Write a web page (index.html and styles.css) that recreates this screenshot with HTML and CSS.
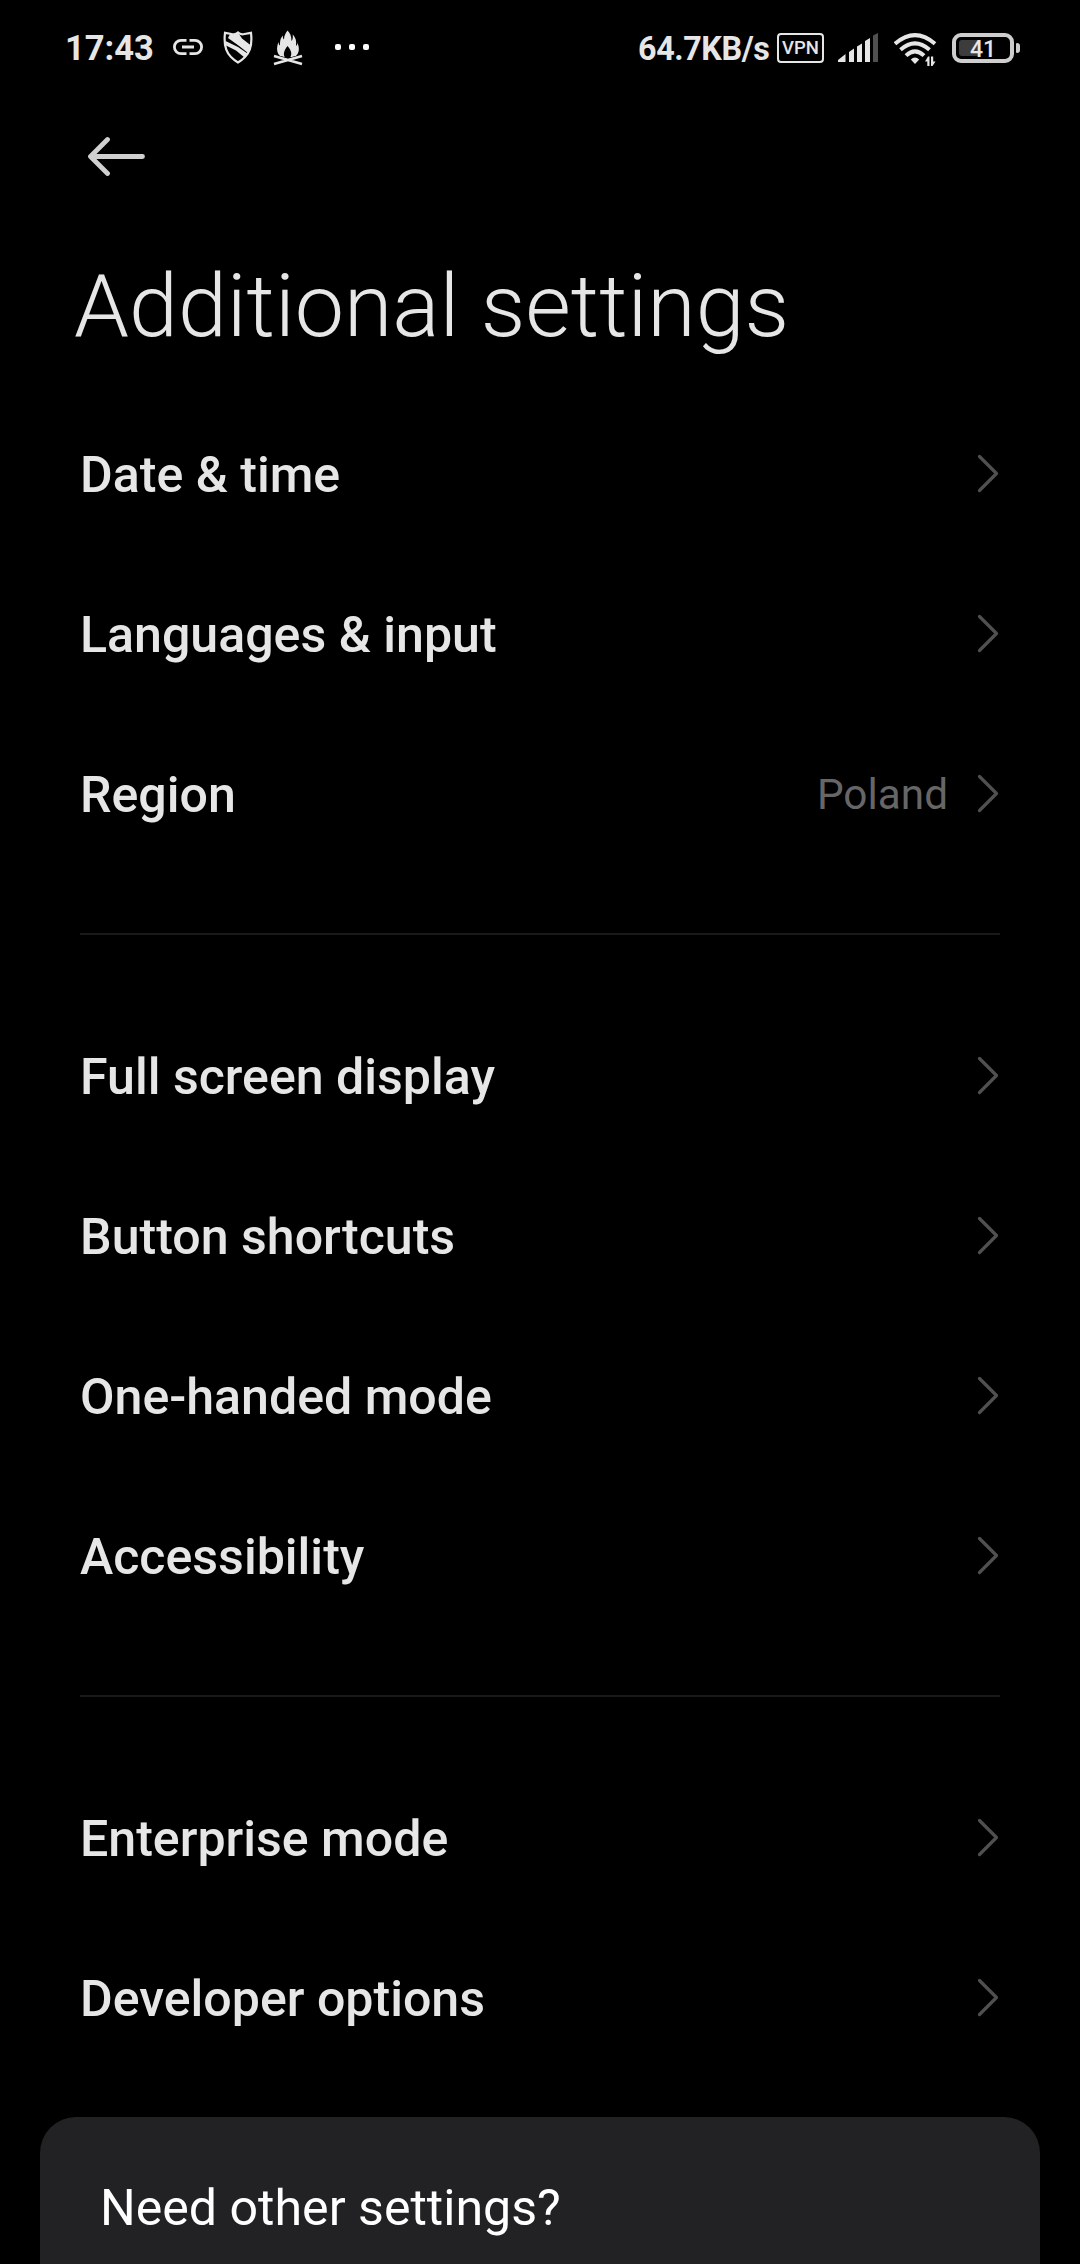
FILE: index.html
```html
<!DOCTYPE html>
<html lang="en">
<head>
<meta charset="utf-8">
<title>Additional settings</title>
<link rel="stylesheet" href="styles.css">
</head>
<body>
<svg class="defs" width="0" height="0" aria-hidden="true">
  <symbol id="chevron" viewBox="0 0 22 40"><path d="M2.500 2.500 19.500 19.500 2.500 36.500" fill="none" stroke="#505050" stroke-width="3.200" stroke-linecap="round" stroke-linejoin="round"/></symbol>
</svg>
<div class="screen">
  <header class="status">
    <div class="status-left">
      <span class="clock">17:43</span>
      <svg class="link" width="30" height="16" viewBox="0 0 30 16" fill="none" stroke="#e6e6e6" stroke-width="2.800"><path d="M13.500 1.400H8a6.600 6.600 0 0 0 0 13.200h5.500M16.500 1.400H22a6.600 6.600 0 0 1 0 13.200h-5.500M9 8h12"/></svg>
      <svg class="shield" width="30" height="33" viewBox="0 0 30 33"><path d="M15 1.500 Q17.500 4 21.500 3 L28 1.800 Q30 18 22 26 Q18.500 29.500 15 31.500 Q11.500 29.500 8 26 Q0 18 2 1.800 L8.500 3 Q12.500 4 15 1.500Z" fill="#000" stroke="#e6e6e6" stroke-width="2.200"/><path d="M7 3 Q12 4 15 1.500 L19 7.500 L28 14.500 Q27.500 18 25 22 L15.500 14.500 L5 7Z M2.500 10 L15 16 L24.500 22.500 L21.500 26.500 L13 19.500 L3 14.500Z" fill="#e6e6e6"/></svg>
      <svg class="fire" width="30" height="36" viewBox="0 0 30 36"><path d="M14.500 .5C17 3 18.500 6 18.500 11c1.200-1 1.600-3.500 1.200-6.500 4 4.500 3.600 7.500 3.300 11.500 1.200-.8 1.500-2 1.300-3.500 2.700 6 1.700 10.500-1.300 13.500l-4 1H11l-4-1C4 23 3 18.500 5.500 12c.2 1.800.6 3 1.500 3.500C7 10.500 7.500 8 10 5.500c-.3 2 0 3.300 1 4C11 5.500 12.500 3.500 14.500.5Z" fill="#e6e6e6"/><path d="M14.500 16c4.500 5 4.500 9 2.500 11.500h-5C10 25 10.500 21 14.500 16Z" fill="#000"/><path d="M1 26.500 29 34M29 26.500 1 34" stroke="#000" stroke-width="4"/><path d="M1 26 29 34M29 26 1 34" stroke="#e6e6e6" stroke-width="2.400"/></svg>
      <svg class="dots" width="36" height="6" viewBox="0 0 36 6" fill="#fff"><rect x="1" width="6" height="6" rx="2"/><rect x="15" width="6" height="6" rx="2"/><rect x="29" width="6" height="6" rx="2"/></svg>
    </div>
    <div class="status-right">
      <span class="speed">64.7KB/s</span>
      <span class="vpn">VPN</span>
      <svg class="signal" width="40" height="29" viewBox="0 0 40 29" fill="#e6e6e6"><path d="M0 29V27L7.500 21V29ZM11 29V19L16 15.500V29ZM19 29V13.500L24 10.500V29ZM27 29V8L32 5V29Z"/><path d="M35 29V2.500L40 0V29Z" fill="#505050"/></svg>
      <svg class="wifi" width="43" height="34" viewBox="0 0 43 34"><g fill="none" stroke="#e6e6e6" stroke-width="4"><path d="M1 10.800Q21 -6.500 41 10.800"/><path d="M6.500 16.800Q21 4 35.500 16.800"/><path d="M12 22.600Q21 14 30 22.600"/></g><path d="M16.800 26.500Q21 22.500 25.200 26.500L21 31Z" fill="#e6e6e6"/><path d="M31 28.500 34 23.500h1.500V33h-2.200V28.500ZM37 23.500h2.200v5h2.300L38.500 33H37Z" fill="#e6e6e6"/></svg>
      <span class="battery"><span class="level">41</span></span>
      <span class="nub"></span>
    </div>
  </header>
  <nav class="toolbar">
    <svg width="60" height="40" viewBox="0 0 60 40" fill="none" stroke="#d0d0d0" stroke-width="4.800" stroke-linecap="round" stroke-linejoin="round"><path d="M20.500 3.500 3.500 20.500 20.500 37.500M4 20.500H55.500"/></svg>
  </nav>
  <h1>Additional settings</h1>
  <main>
    <section class="group">
      <div class="row"><span>Date &amp; time</span><svg class="chev"><use href="#chevron"/></svg></div>
      <div class="row"><span>Languages &amp; input</span><svg class="chev"><use href="#chevron"/></svg></div>
      <div class="row"><span>Region</span><span class="value">Poland</span><svg class="chev"><use href="#chevron"/></svg></div>
    </section>
    <section class="group">
      <div class="row"><span>Full screen display</span><svg class="chev"><use href="#chevron"/></svg></div>
      <div class="row"><span>Button shortcuts</span><svg class="chev"><use href="#chevron"/></svg></div>
      <div class="row"><span>One-handed mode</span><svg class="chev"><use href="#chevron"/></svg></div>
      <div class="row"><span>Accessibility</span><svg class="chev"><use href="#chevron"/></svg></div>
    </section>
    <section class="group">
      <div class="row"><span>Enterprise mode</span><svg class="chev"><use href="#chevron"/></svg></div>
      <div class="row"><span>Developer options</span><svg class="chev"><use href="#chevron"/></svg></div>
    </section>
  </main>
  <aside class="card">Need other settings?</aside>
</div>
</body>
</html>
```
FILE: styles.css
```css
* { box-sizing: border-box; }
body { margin: 0; background: #000; color: #e6e6e6; font-family: Roboto, sans-serif; }
svg { display: block; flex: none; }
.defs { position: absolute; }
.screen { width: 1080px; height: 2264px; overflow: hidden; display: flex; flex-direction: column; }

.status { height: 96px; flex: none; padding: 0 60px 0 65px; display: flex; justify-content: space-between; align-items: center; white-space: nowrap; }
.status-left, .status-right { display: flex; align-items: center; }
.clock { width: 108px; font-size: 34.5px; font-weight: 700; line-height: 40px; }
.link { margin-top: -2px; }
.shield { margin: -2px 0 0 20px; }
.fire { margin-left: 20px; }
.dots { margin: -2px 0 0 31px; }
.speed { width: 139px; font-size: 32.3px; font-weight: 700; line-height: 40px; letter-spacing: -0.4px; padding-top: 1px; }
.vpn { width: 47px; height: 30px; border: 2.5px solid #e6e6e6; border-radius: 4px; font-size: 18.5px; font-weight: 500; line-height: 27px; text-align: center; }
.signal { margin: -1px 0 0 14px; }
.wifi { margin: 3px 0 0 16px; }
.battery { width: 62px; height: 30px; margin-left: 15px; border: 4px solid #cecece; border-radius: 9px; padding: 3px; }
.level { display: block; width: 48px; height: 16px; border-radius: 3px; background: linear-gradient(90deg, #3c3c3c 19px, transparent 19px); font-size: 23px; font-weight: 500; line-height: 19px; text-align: center; }
.nub { width: 4px; height: 10px; margin-left: 2px; border-radius: 1px 3px 3px 1px; background: #cecece; }

.toolbar { height: 120px; flex: none; padding: 40px 0 0 87px; }
h1 { height: 178px; margin: 0; padding: 38px 0 0 74px; flex: none; font-size: 88px; font-weight: 300; line-height: 104px; white-space: nowrap; }

main { flex: none; padding: 0 80px; }
.group + .group { margin-top: 59px; padding-top: 61px; border-top: 2px solid #191919; }
.row { height: 160px; padding-top: 2px; display: flex; align-items: center; justify-content: space-between; font-size: 50.1px; font-weight: 500; line-height: 60px; white-space: nowrap; }
.value { margin-left: auto; margin-right: 29px; font-size: 42.3px; font-weight: 400; color: #666; }
.chev { width: 22px; height: 40px; margin: -3px 1px 0 0; }

.card { flex: 1; margin: 39px 40px 0; padding: 61px 60px 0; border-radius: 36px 36px 0 0; background: #222224; color: #fff; font-size: 50.1px; line-height: 60px; }
```
